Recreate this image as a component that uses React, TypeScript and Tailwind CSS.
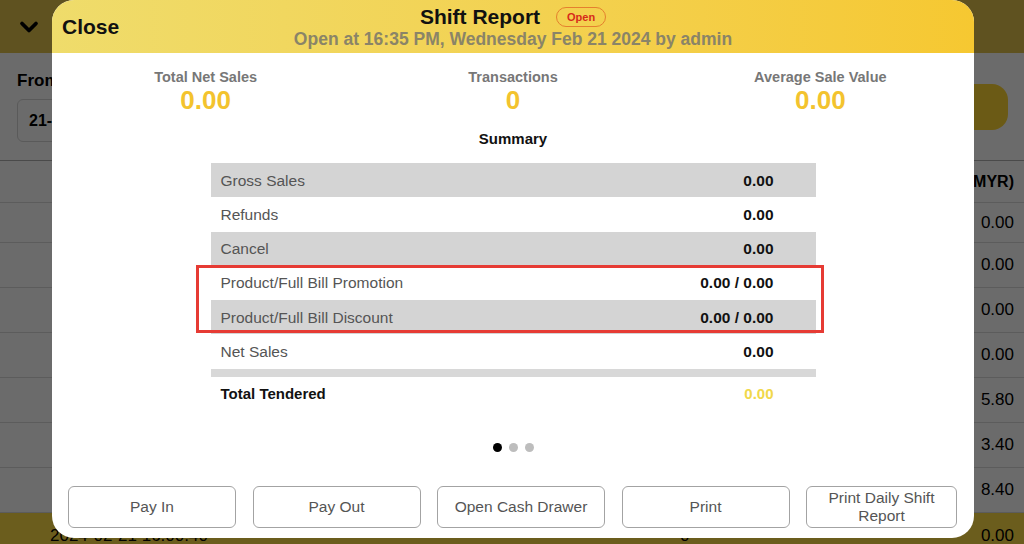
import { ChevronDown } from "lucide-react";

type Row = {
  label: string;
  value: string;
  shaded?: boolean;
};

const summaryRows: Row[] = [
  { label: "Gross Sales", value: "0.00", shaded: true },
  { label: "Refunds", value: "0.00" },
  { label: "Cancel", value: "0.00", shaded: true },
  { label: "Product/Full Bill Promotion", value: "0.00 / 0.00" },
  { label: "Product/Full Bill Discount", value: "0.00 / 0.00", shaded: true },
  { label: "Net Sales", value: "0.00" },
];

const stats = [
  { label: "Total Net Sales", value: "0.00" },
  { label: "Transactions", value: "0" },
  { label: "Average Sale Value", value: "0.00" },
];

const pageRows = ["0.00", "0.00", "0.00", "0.00", "5.80", "3.40", "8.40"];

const actions = ["Pay In", "Pay Out", "Open Cash Drawer", "Print"];

// page sitting behind the dialog
const BackgroundPage = () => (
  <div className="flex flex-col">
    <div className="h-[53px] bg-[#e2c34c] flex items-center pl-[15px]">
      <ChevronDown size={28} strokeWidth={3.2} color="#000" />
    </div>
    <div className="h-[107px] flex items-start justify-between">
      <div className="pl-[17px] pt-[19px]">
        <p className="text-[17px] font-bold leading-none text-black">From</p>
        <div className="mt-[10px] h-[43px] w-[200px] rounded-md border border-[#d6d6d6] flex items-center px-[11px] text-[16px] font-bold text-black">
          21-02-2024
        </div>
      </div>
      <div className="mt-[31px] mr-[16px] h-[46px] w-[150px] rounded-2xl bg-[#ffd634]" />
    </div>
    <div className="border-t border-[#b0b0b0]">
      <div className="h-[42px] border-b border-[#dbdbdb] flex items-center justify-end pr-[10px] text-[16px] font-bold text-black">
        Amount (MYR)
      </div>
      {pageRows.map((v, i) => (
        <div
          key={i}
          className={`${i === 0 ? "h-[40px]" : "h-[45px]"} border-b border-[#dbdbdb] flex items-center justify-end pr-[10px] text-[17px] text-black`}
        >
          {v}
        </div>
      ))}
      <div className="h-[45px] bg-[#ffdd45] flex items-center pl-[50px] pr-[10px] text-[17px] text-black">
        <span className="w-[630px]">2024-02-21 16:00:40</span>
        <span className="flex-1">0</span>
        <span>0.00</span>
      </div>
    </div>
  </div>
);

const ShiftReport = () => (
  <div className="absolute left-[52px] top-0 w-[922px] h-[538px] rounded-[22px] bg-white overflow-hidden flex flex-col">
    {/* header */}
    <div className="h-[53px] shrink-0 bg-gradient-to-r from-[#efdc6b] to-[#f6c831] grid grid-cols-[1fr_auto_1fr]">
      <button className="justify-self-start self-center pl-[10px] text-[21px] font-bold text-[#111]">Close</button>
      <div className="flex flex-col items-center pt-[6px]">
        <div className="flex items-center gap-[16px] h-[22px]">
          <span className="text-[21px] font-bold leading-[22px] text-[#111]">Shift Report</span>
          <span className="h-[20px] w-[50px] rounded-full border-[1.5px] border-[#e5802e] flex items-center justify-center text-[11px] font-bold text-[#d72b1b]">
            Open
          </span>
        </div>
        <p className="mt-[1px] text-[17.5px] leading-[20px] font-bold text-[#8a8468]">
          Open at 16:35 PM, Wednesday Feb 21 2024 by admin
        </p>
      </div>
      <div />
    </div>

    {/* totals */}
    <div className="grid grid-cols-3 pt-[16px]">
      {stats.map((s) => (
        <div key={s.label} className="flex flex-col items-center">
          <span className="text-[14.5px] leading-[17px] font-bold text-[#777]">{s.label}</span>
          <span className="text-[26px] leading-[28px] font-bold text-[#f3c32e]">{s.value}</span>
        </div>
      ))}
    </div>

    <p className="mt-[16px] text-center text-[15px] leading-[18px] font-bold text-[#111]">Summary</p>

    {/* summary table */}
    <div className="relative mt-[15px] mx-auto w-[605px]">
      {summaryRows.map((r) => (
        <div
          key={r.label}
          className={`h-[34.3px] flex items-center justify-between pl-[10px] pr-[42px] ${r.shaded ? "bg-[#d4d4d4]" : "bg-white"}`}
        >
          <span className="text-[15.5px] text-[#555]">{r.label}</span>
          <span className="text-[15.5px] font-bold text-[#111]">{r.value}</span>
        </div>
      ))}
      <div className="h-[8px] bg-[#d8d8d8]" />
      <div className="h-[35px] flex items-center justify-between pl-[10px] pr-[42px]">
        <span className="text-[15px] font-bold text-[#111]">Total Tendered</span>
        <span className="text-[15px] font-bold text-[#f1d84a]">0.00</span>
      </div>
      {/* highlight box */}
      <div className="absolute left-[-15px] top-[102px] w-[628px] h-[68px] border-[3px] border-[#e63b34]" />
    </div>

    {/* pager dots */}
    <div className="mt-[31px] flex justify-center gap-[7px]">
      <span className="h-[9px] w-[9px] rounded-full bg-black" />
      <span className="h-[9px] w-[9px] rounded-full bg-[#bdbdbd]" />
      <span className="h-[9px] w-[9px] rounded-full bg-[#bdbdbd]" />
    </div>

    {/* actions */}
    <div className="mt-auto mb-[10px] flex gap-[16.5px] pl-[16px]">
      {actions.map((a) => (
        <button
          key={a}
          className="h-[42px] w-[168px] rounded-[6px] border border-[#a3a3a3] text-[15.5px] text-[#555]"
        >
          {a}
        </button>
      ))}
      <button className="h-[42px] w-[151px] rounded-[6px] border border-[#a3a3a3] text-[15.5px] leading-[18px] text-[#555] px-[6px]">
        Print Daily Shift Report
      </button>
    </div>
  </div>
);

export default function App() {
  return (
    <div className="relative h-[544px] w-[1024px] overflow-hidden bg-white font-['Liberation_Sans',Arial,sans-serif]">
      <BackgroundPage />
      <div className="absolute inset-0 bg-black/[0.58]" />
      <ShiftReport />
    </div>
  );
}
